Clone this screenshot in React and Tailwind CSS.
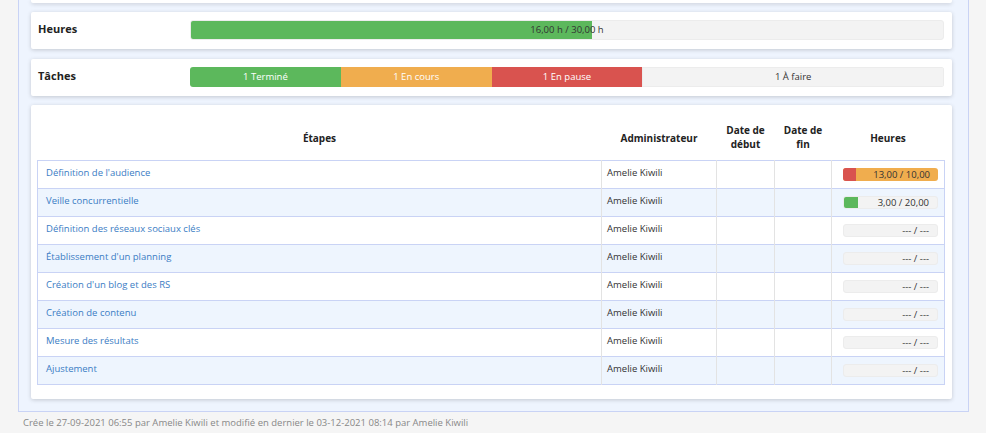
import React from "react";

const rows = [
  { name: "Définition de l'audience", admin: "Amelie Kiwili", kind: "over" },
  { name: "Veille concurrentielle", admin: "Amelie Kiwili", kind: "part" },
  { name: "Définition des réseaux sociaux clés", admin: "Amelie Kiwili" },
  { name: "Établissement d'un planning", admin: "Amelie Kiwili" },
  { name: "Création d'un blog et des RS", admin: "Amelie Kiwili" },
  { name: "Création de contenu", admin: "Amelie Kiwili" },
  { name: "Mesure des résultats", admin: "Amelie Kiwili" },
  { name: "Ajustement", admin: "Amelie Kiwili" },
];

const MiniBar = ({ kind }) => {
  if (kind === "over") {
    return (
      <div className="grid h-[13px] rounded-[3px] overflow-hidden bg-[#f0ad4e]">
        <div className="col-start-1 row-start-1 flex">
          <div className="w-[13px] bg-[#d9534f]" />
        </div>
        <div className="col-start-1 row-start-1 text-right pr-2 text-[9.5px] leading-[13px] text-[#333]">
          13,00 / 10,00
        </div>
      </div>
    );
  }
  if (kind === "part") {
    return (
      <div className="grid h-[13px] rounded-[3px] overflow-hidden bg-[#f3f3f3] border border-[#ececec]">
        <div className="col-start-1 row-start-1 flex">
          <div className="w-[14px] bg-[#5cb85c]" />
        </div>
        <div className="col-start-1 row-start-1 text-right pr-2 text-[9.5px] leading-[11px] text-[#333]">
          3,00 / 20,00
        </div>
      </div>
    );
  }
  return (
    <div className="h-[13px] rounded-[3px] bg-[#f3f3f3] border border-[#ececec] text-right pr-2 text-[9.5px] leading-[11px] text-[#333]">
      --- / ---
    </div>
  );
};

const App = () => {
  return (
    <div
      className="min-h-[433px] w-[986px] bg-[#f5f5f5] text-[#333]"
      style={{ fontFamily: '"Open Sans", "Noto Sans", sans-serif' }}
    >
      <div className="ml-[18px] w-[951px] bg-[#eef4fe] border-x border-b border-[#c9d3f5] pl-3 pr-4 pb-3">
        {/* tail of the card above */}
        <div className="h-[3px] bg-white rounded-b-[2px] shadow-[0_1px_4px_rgba(0,0,0,0.18)]" />

        {/* Heures */}
        <div className="mt-[9px] h-[37px] bg-white rounded-[2px] shadow-[0_1px_4px_rgba(0,0,0,0.18)] flex items-center pl-[7px] pr-[8px] pb-[2px]">
          <div className="w-[152px] text-[11px] font-bold text-[#222]">Heures</div>
          <div className="flex-1 grid h-[20px] rounded-[3px] overflow-hidden bg-[#f3f3f3] border border-[#ececec]">
            <div className="col-start-1 row-start-1 flex">
              <div className="w-[53.3%] bg-[#5cb85c]" />
            </div>
            <div className="col-start-1 row-start-1 text-center text-[9.5px] leading-[18px] text-[#333]">
              16,00 h / 30,00 h
            </div>
          </div>
        </div>

        {/* Tâches */}
        <div className="mt-[10px] h-[37px] bg-white rounded-[2px] shadow-[0_1px_4px_rgba(0,0,0,0.18)] flex items-center pl-[7px] pr-[8px] pb-[2px]">
          <div className="w-[152px] text-[11px] font-bold text-[#222]">Tâches</div>
          <div className="flex-1 grid grid-cols-5 h-[20px] rounded-[3px] overflow-hidden text-[9.5px] leading-[20px] text-center">
            <div className="bg-[#5cb85c] text-white">1 Terminé</div>
            <div className="bg-[#f0ad4e] text-white">1 En cours</div>
            <div className="bg-[#d9534f] text-white">1 En pause</div>
            <div className="col-span-2 bg-[#f3f3f3] text-[#333] border border-[#ececec] leading-[18px]">1 À faire</div>
          </div>
        </div>

        {/* Étapes table */}
        <div className="mt-[9px] bg-white rounded-[2px] shadow-[0_1px_4px_rgba(0,0,0,0.18)] pt-[10px] pb-[14px] pl-[6px] pr-[7px]">
          <table className="w-[907px] border-collapse text-[9.5px] table-fixed">
            <colgroup>
              <col className="w-[564px]" />
              <col className="w-[115px]" />
              <col className="w-[58px]" />
              <col className="w-[57px]" />
              <col className="w-[113px]" />
            </colgroup>
            <thead>
              <tr className="h-[45px] text-[10px] font-bold text-[#222] leading-[14px]">
                <th className="text-center align-middle pt-[1px]">Étapes</th>
                <th className="text-center align-middle pt-[1px]">Administrateur</th>
                <th className="text-center align-middle">Date de<br />début</th>
                <th className="text-center align-middle">Date de<br />fin</th>
                <th className="text-center align-middle pt-[1px]">Heures</th>
              </tr>
            </thead>
            <tbody>
              {rows.map((r, i) => (
                <tr
                  key={i}
                  className={`h-[28px] border border-[#c9d3f5] ${i % 2 === 1 ? "bg-[#eef5fe]" : "bg-white"}`}
                >
                  <td className="pl-2 pb-[2px] text-[#3a7cc4] border-r border-[#e3e3e3]">{r.name}</td>
                  <td className="pl-[5px] pb-[1px] text-[#333] border-r border-[#e3e3e3]">{r.admin}</td>
                  <td className="border-r border-[#e3e3e3]" />
                  <td className="border-r border-[#e3e3e3]" />
                  <td className="pl-[11px] pr-[6px]">
                    <MiniBar kind={r.kind} />
                  </td>
                </tr>
              ))}
            </tbody>
          </table>
        </div>
      </div>

      <div className="pl-[23px] pt-[4px] text-[9.5px] text-[#888]">
        Crée le 27-09-2021 06:55 par Amelie Kiwili et modifié en dernier le 03-12-2021 08:14 par Amelie Kiwili
      </div>
    </div>
  );
};

export default App;
